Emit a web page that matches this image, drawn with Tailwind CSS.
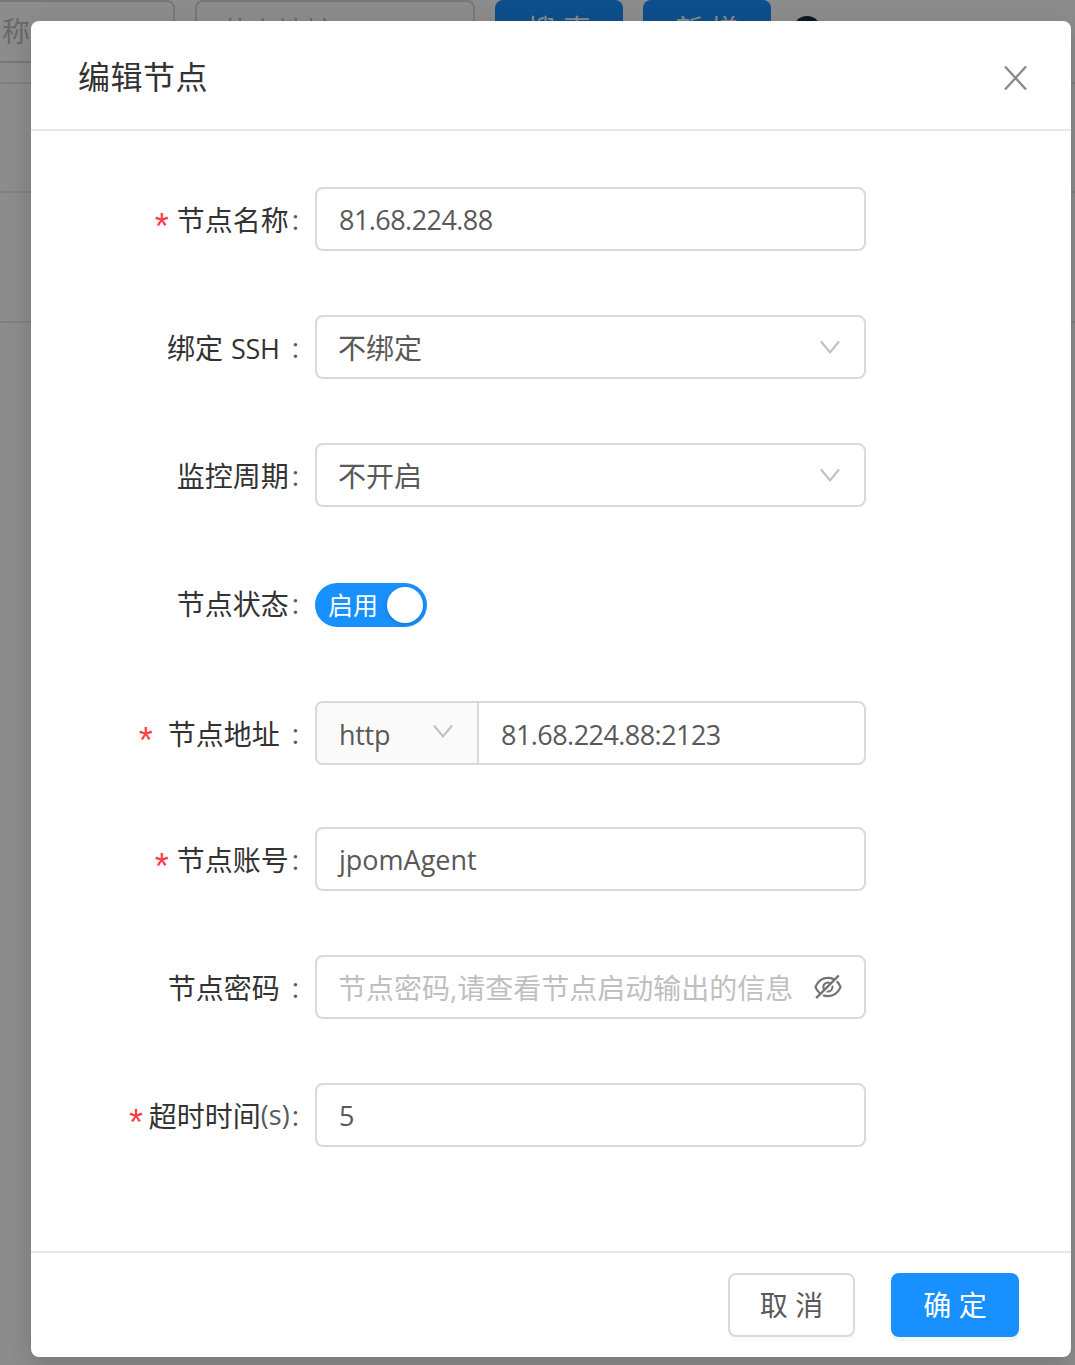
<!DOCTYPE html>
<html lang="zh-CN">
  <head>
    <meta charset="UTF-8" />
    <meta name="viewport" content="width=device-width, initial-scale=1.0" />
    <title>编辑节点</title>
    <script src="https://cdn.jsdelivr.net/npm/@tailwindcss/browser@4"></script>
  </head>
  <body class="relative w-[1075px] h-[1365px] overflow-hidden bg-white font-['Open_Sans','Noto_Sans_CJK_SC',sans-serif] text-[28px] text-[#595959]">
    <!-- 背后的列表页 -->
    <div class="h-[63px] flex items-start gap-[20px] border-b-0">
      <div class="w-[195px] h-[63px] -ml-[20px] shrink-0 border-2 border-[#d9d9d9] rounded-lg pt-[8px] pl-[20px] text-[#bfbfbf]">称</div>
      <div class="w-[280px] h-[63px] border-2 border-[#d9d9d9] rounded-lg pt-[8px] pl-[24px] text-[#bfbfbf]">节点地址</div>
      <div class="w-[128px] h-[63px] rounded-lg bg-[#1890ff] text-white text-center pt-[8px]">搜 索</div>
      <div class="w-[128px] h-[63px] rounded-lg bg-[#1890ff] text-white text-center pt-[8px]">新 增</div>
      <div class="w-[28px] h-[28px] mt-[16px] ml-[2px] rounded-full bg-[#1f2d3d]"></div>
    </div>
    <div class="h-[19px] border-b-2 border-[#e8e8e8] box-content"></div>
    <div class="h-[107px] border-b-2 border-[#e8e8e8] box-content"></div>
    <div class="h-[128px] border-b-2 border-[#e8e8e8] box-content"></div>

    <!-- 遮罩 -->
    <div class="absolute inset-0 bg-black/45"></div>

    <!-- 编辑节点弹窗 -->
    <div class="absolute left-[31px] top-[21px] w-[1040px] h-[1336px] flex flex-col bg-white rounded-lg shadow-[0_8px_24px_rgba(0,0,0,0.15)]">
      <div class="h-[110px] shrink-0 flex items-center justify-between pl-[47px] pr-[44px] border-b-2 border-[#e8e8e8]">
        <h1 class="text-[32px] tracking-[0.5px] text-[#333333] font-normal translate-y-[2px]">编辑节点</h1>
        <svg class="w-[23px] h-[24px] translate-y-[3px]" viewBox="0 0 23 24" fill="none" stroke="#8c8c8c" stroke-width="2.4">
          <path d="M1 0.5l21 23M22 0.5L1 23.5" />
        </svg>
      </div>

      <form class="flex-1 pt-[56px]">
        <div class="flex h-[64px] mb-[64px]">
          <label class="w-[284px] shrink-0 flex items-center justify-end pr-[16px] text-[#333333]"><span class="text-[#ff3b46] font-['Liberation_Mono'] mr-[4px] text-[36px] leading-none translate-y-[12px]">*</span><span class="translate-y-px">节点名称</span><span class="ml-[3px] text-[#595959]">:</span></label>
          <div class="w-[551px] border-2 border-[#d9d9d9] rounded-lg flex items-center px-[22px] pt-[2px] text-[27px] tracking-[-0.55px]">81.68.224.88</div>
        </div>
        <div class="flex h-[64px] mb-[64px]">
          <label class="w-[284px] shrink-0 flex items-center justify-end pr-[16px] text-[#333333]"><span class="translate-y-px">绑定</span><span class="ml-[8px] text-[27px] tracking-[-0.3px] translate-y-[2px]">SSH</span><span class="ml-[12px] text-[#595959]">:</span></label>
          <div class="w-[551px] border-2 border-[#d9d9d9] rounded-lg flex items-center justify-between pl-[21px] pr-[24px]">
            <span class="translate-y-px">不绑定</span>
            <svg class="w-[20px] h-[14px]" viewBox="0 0 20 14" fill="none" stroke="#bfbfbf" stroke-width="2"><path d="M1 1.5l9 11 9-11" /></svg>
          </div>
        </div>
        <div class="flex h-[64px] mb-[64px]">
          <label class="w-[284px] shrink-0 flex items-center justify-end pr-[16px] text-[#333333]"><span class="translate-y-px">监控周期</span><span class="ml-[3px] text-[#595959]">:</span></label>
          <div class="w-[551px] border-2 border-[#d9d9d9] rounded-lg flex items-center justify-between pl-[21px] pr-[24px]">
            <span class="translate-y-px">不开启</span>
            <svg class="w-[20px] h-[14px]" viewBox="0 0 20 14" fill="none" stroke="#bfbfbf" stroke-width="2"><path d="M1 1.5l9 11 9-11" /></svg>
          </div>
        </div>
        <div class="flex h-[68px] mb-[62px] items-center">
          <label class="w-[284px] shrink-0 flex items-center justify-end pr-[16px] text-[#333333]"><span class="-translate-y-px">节点状态</span><span class="ml-[3px] text-[#595959] -translate-y-[2px]">:</span></label>
          <div class="w-[112px] h-[44px] rounded-full bg-[#1890ff] flex items-center justify-between pl-[13px] pr-[4px] text-white text-[25px]">
            <span class="translate-y-px">启用</span>
            <span class="w-[36px] h-[36px] rounded-full bg-white shadow-[0_2px_4px_rgba(0,35,11,0.2)]"></span>
          </div>
        </div>
        <div class="flex h-[64px] mb-[62px]">
          <label class="w-[284px] shrink-0 flex items-center justify-end pr-[16px] text-[#333333]"><span class="text-[#ff3b46] font-['Liberation_Mono'] mr-[11px] text-[36px] leading-none translate-y-[12px]">*</span><span class="translate-y-px">节点地址</span><span class="ml-[12px] text-[#595959]">:</span></label>
          <div class="w-[551px] border-2 border-[#d9d9d9] rounded-lg flex overflow-hidden">
            <div class="w-[162px] shrink-0 bg-[#fafafa] border-r-2 border-[#d9d9d9] flex items-center justify-between pl-[22px] pr-[24px] text-[27px] tracking-[-0.3px]">
              <span class="translate-y-[2px]">http</span>
              <svg class="w-[20px] h-[14px] -translate-y-[2px]" viewBox="0 0 20 14" fill="none" stroke="#bfbfbf" stroke-width="2"><path d="M1 1.5l9 11 9-11" /></svg>
            </div>
            <div class="flex-1 flex items-center px-[22px] pt-[4px] text-[27px] tracking-[-0.55px]">81.68.224.88:2123</div>
          </div>
        </div>
        <div class="flex h-[64px] mb-[64px]">
          <label class="w-[284px] shrink-0 flex items-center justify-end pr-[16px] text-[#333333]"><span class="text-[#ff3b46] font-['Liberation_Mono'] mr-[4px] text-[36px] leading-none translate-y-[12px]">*</span><span class="translate-y-px">节点账号</span><span class="ml-[3px] text-[#595959]">:</span></label>
          <div class="w-[551px] border-2 border-[#d9d9d9] rounded-lg flex items-center px-[22px] pt-[3px] text-[27px]">jpomAgent</div>
        </div>
        <div class="flex h-[64px] mb-[64px]">
          <label class="w-[284px] shrink-0 flex items-center justify-end pr-[16px] text-[#333333]"><span class="translate-y-px">节点密码</span><span class="ml-[12px] text-[#595959]">:</span></label>
          <div class="w-[551px] border-2 border-[#d9d9d9] rounded-lg flex items-center justify-between pl-[21px] pr-[22px] text-[#bfbfbf]">
            <span class="translate-y-px">节点密码,请查看节点启动输出的信息</span>
            <svg class="w-[28px] h-[28px]" viewBox="64 64 896 896" fill="#737373">
              <path d="M942.2 486.2Q889.47 375.11 816.7 305l-50.88 50.88C807.31 395.84 843.45 447.4 874.7 512 791.5 684.2 673.4 766 512 766q-72.67 0-133.87-22.38L323 798.75Q408 838 512 838q288.3 0 430.2-300.3a60.29 60.29 0 0 0 0-51.5zm-63.57-320.64L836 122.88a8 8 0 0 0-11.32 0L715.31 232.2Q624.86 186 512 186q-288.3 0-430.2 300.3a60.3 60.3 0 0 0 0 51.5q56.69 119.4 136.5 191.41L112.48 835a8 8 0 0 0 0 11.31L155.17 889a8 8 0 0 0 11.31 0l712.15-712.12a8 8 0 0 0 0-11.32zM149.3 512C232.6 339.8 350.7 258 512 258c54.54 0 104.13 9.36 149.12 28.39l-70.3 70.3a176 176 0 0 0-238.13 238.13l-83.42 83.42C223.1 637.49 183.3 582.28 149.3 512zm246.7 0a112.11 112.11 0 0 1 146.2-106.69L401.31 546.2A112 112 0 0 1 396 512z" />
              <path d="M508 624c-3.46 0-6.87-.16-10.25-.47l-52.82 52.82a176.09 176.09 0 0 0 227.42-227.42l-52.82 52.82c.31 3.38.47 6.79.47 10.25a111.94 111.94 0 0 1-112 112z" />
            </svg>
          </div>
        </div>
        <div class="flex h-[64px]">
          <label class="w-[284px] shrink-0 flex items-center justify-end pr-[16px] text-[#333333]"><span class="text-[#ff3b46] font-['Liberation_Mono'] mr-[2px] text-[36px] leading-none translate-y-[12px]">*</span><span class="translate-y-px">超时时间</span><span class="text-[27px] text-[#595959]">(s)</span><span class="ml-[2px] text-[#595959]">:</span></label>
          <div class="w-[551px] border-2 border-[#d9d9d9] rounded-lg flex items-center px-[22px] pt-[2px] text-[27px]">5</div>
        </div>
      </form>

      <div class="h-[106px] shrink-0 flex items-start justify-end gap-[36px] pt-[20px] pr-[52px] border-t-2 border-[#e8e8e8]">
        <button type="button" class="w-[127px] h-[64px] border-2 border-[#d9d9d9] rounded-lg bg-white shadow-[0_4px_0_rgba(0,0,0,0.015)]">取 消</button>
        <button type="button" class="w-[128px] h-[64px] rounded-lg bg-[#1890ff] text-white shadow-[0_4px_0_rgba(0,0,0,0.045)]">确 定</button>
      </div>
    </div>
  </body>
</html>
